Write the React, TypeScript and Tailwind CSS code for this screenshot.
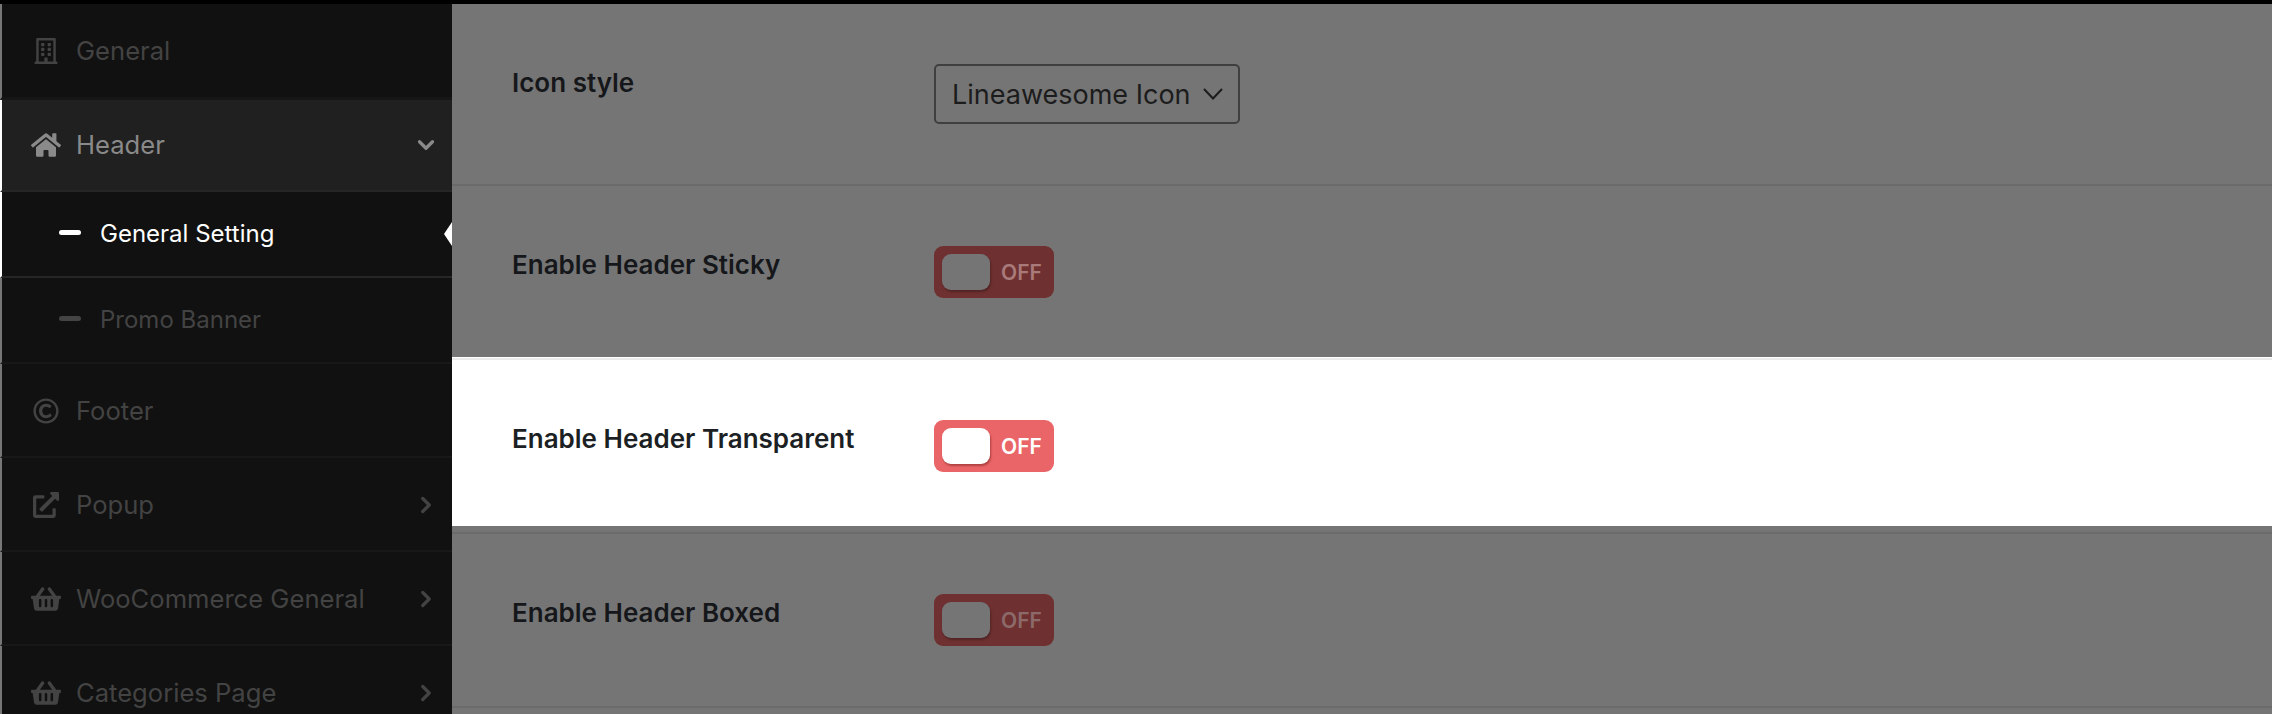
import { ChevronDown, ChevronRight } from "lucide-react";
import { FaRegBuilding, FaHome, FaRegCopyright, FaExternalLinkAlt, FaShoppingBasket } from "react-icons/fa";
import type { ReactNode } from "react";

function NavItem({ icon, label, chevron }: { icon: ReactNode; label: string; chevron?: boolean }) {
    return (
        <div className="flex h-[94px] shrink-0 items-center border-b-2 border-l-2 border-b-[#181818] border-l-[#777777] pt-[2px] text-[#434343]">
            <div className="flex w-[60px] ml-[14px] justify-center">{icon}</div>
            <span className="text-[25.6px]">{label}</span>
            {chevron && <ChevronRight className="ml-auto mr-[13px]" size={26} strokeWidth={3} />}
        </div>
    );
}

function Toggle({ dim, offColor }: { dim?: boolean; offColor?: string }) {
    return (
        <div className={`flex h-[52px] w-[120px] items-center rounded-[9px] pl-2 ${dim ? "bg-[#6e3030]" : "bg-[#ea6567]"}`}>
            <div className={`h-9 w-12 rounded-[9px] ${dim ? "bg-[#757575] shadow-[1px_2px_2px_rgba(0,0,0,0.25)]" : "bg-white shadow-[1px_2px_2px_rgba(120,30,30,0.5)]"}`} />
            <span className={`ml-[11px] pt-[2px] text-[21px] font-semibold ${offColor}`}>OFF</span>
        </div>
    );
}

function Row({ label, children, className }: { label: string; children: ReactNode; className: string }) {
    return (
        <div className={`flex pl-[60px] ${className}`}>
            <div className="mt-[1px] w-[422px] text-[26px] leading-[36px] font-semibold">{label}</div>
            {children}
        </div>
    );
}

export default function App() {
    return (
        <div className="flex h-[714px] flex-col overflow-hidden bg-[#757575] font-['Inter',sans-serif]">
            <div className="h-1 shrink-0 bg-black" />
            <div className="flex flex-1 overflow-hidden">
                {/* Sidebar */}
                <aside className="relative flex w-[452px] shrink-0 flex-col bg-[#111111]">
                    <div className="flex h-[96px] shrink-0 items-center border-b-[3px] border-l-2 border-b-[#161616] border-l-[#777777] text-[#434343]">
                        <div className="flex w-[60px] ml-[14px] justify-center text-[26px]"><FaRegBuilding /></div>
                        <span className="pt-[2px] text-[25.6px]">General</span>
                    </div>
                    <div className="flex h-[92px] shrink-0 items-center border-b-2 border-l-2 border-b-[#262626] border-l-white bg-[#202020] text-[#8a8a8a]">
                        <div className="flex w-[60px] ml-[14px] justify-center text-[30px]"><FaHome /></div>
                        <span className="text-[25.6px]">Header</span>
                        <ChevronDown className="ml-auto mr-[13px]" size={26} strokeWidth={3} />
                    </div>
                    <div className="relative flex h-[86px] shrink-0 items-center border-b-2 border-l-2 border-b-[#262626] border-l-white pb-[1px] text-white">
                        <div className="mb-[2px] ml-[57px] h-[5px] w-[22px] rounded-full bg-white" />
                        <span className="ml-[19px] text-[24px]">General Setting</span>
                        <div className="absolute right-0 top-[30px] h-0 w-0 border-y-[12px] border-r-[8px] border-y-transparent border-r-white" />
                    </div>
                    <div className="flex h-[86px] shrink-0 items-center border-b-2 border-l-2 border-b-[#181818] border-l-[#777777] text-[#434343]">
                        <div className="mb-[3px] ml-[57px] h-[5px] w-[22px] rounded-full bg-[#444444]" />
                        <span className="ml-[19px] text-[24px]">Promo Banner</span>
                    </div>
                    <NavItem icon={<FaRegCopyright className="text-[26px]" />} label="Footer" />
                    <NavItem icon={<FaExternalLinkAlt className="text-[26px]" />} label="Popup" chevron />
                    <NavItem icon={<FaShoppingBasket className="text-[30px]" />} label="WooCommerce General" chevron />
                    <NavItem icon={<FaShoppingBasket className="text-[30px]" />} label="Categories Page" chevron />
                </aside>

                {/* Settings */}
                <main className="flex flex-1 flex-col text-[#15171a]">
                    <Row label="Icon style" className="h-[182px] shrink-0 border-b-2 border-[#6b6b6b] pt-[60px]">
                        <div className="flex h-[60px] w-[306px] items-center justify-between rounded-[5px] border-2 border-[#3f3f3f] pl-[16px] pr-[15px] text-[27px] text-[#1c1c1c]">
                            <span className="pt-[2px]">Lineawesome Icon</span>
                            <svg width="20" height="12" viewBox="0 0 20 12" fill="none" stroke="#1c1c1c" strokeWidth="2">
                                <path d="M1 1 L10 10.5 L19 1" />
                            </svg>
                        </div>
                    </Row>
                    <Row label="Enable Header Sticky" className="h-[171px] shrink-0 pt-[60px]">
                        <Toggle dim offColor="text-[#a87a7a]" />
                    </Row>
                    <div className="h-[3px] shrink-0 border-b-2 border-[#ececec] bg-white" />
                    <Row label="Enable Header Transparent" className="h-[166px] shrink-0 bg-white pt-[60px] text-[#1c1f23]">
                        <Toggle offColor="text-white" />
                    </Row>
                    <div className="h-2 shrink-0 border-b-2 border-[#6b6b6b]" />
                    <Row label="Enable Header Boxed" className="h-[174px] shrink-0 border-b-2 border-[#6b6b6b] pt-[60px]">
                        <Toggle dim offColor="text-[#8c6a6a]" />
                    </Row>
                </main>
            </div>
        </div>
    );
}
